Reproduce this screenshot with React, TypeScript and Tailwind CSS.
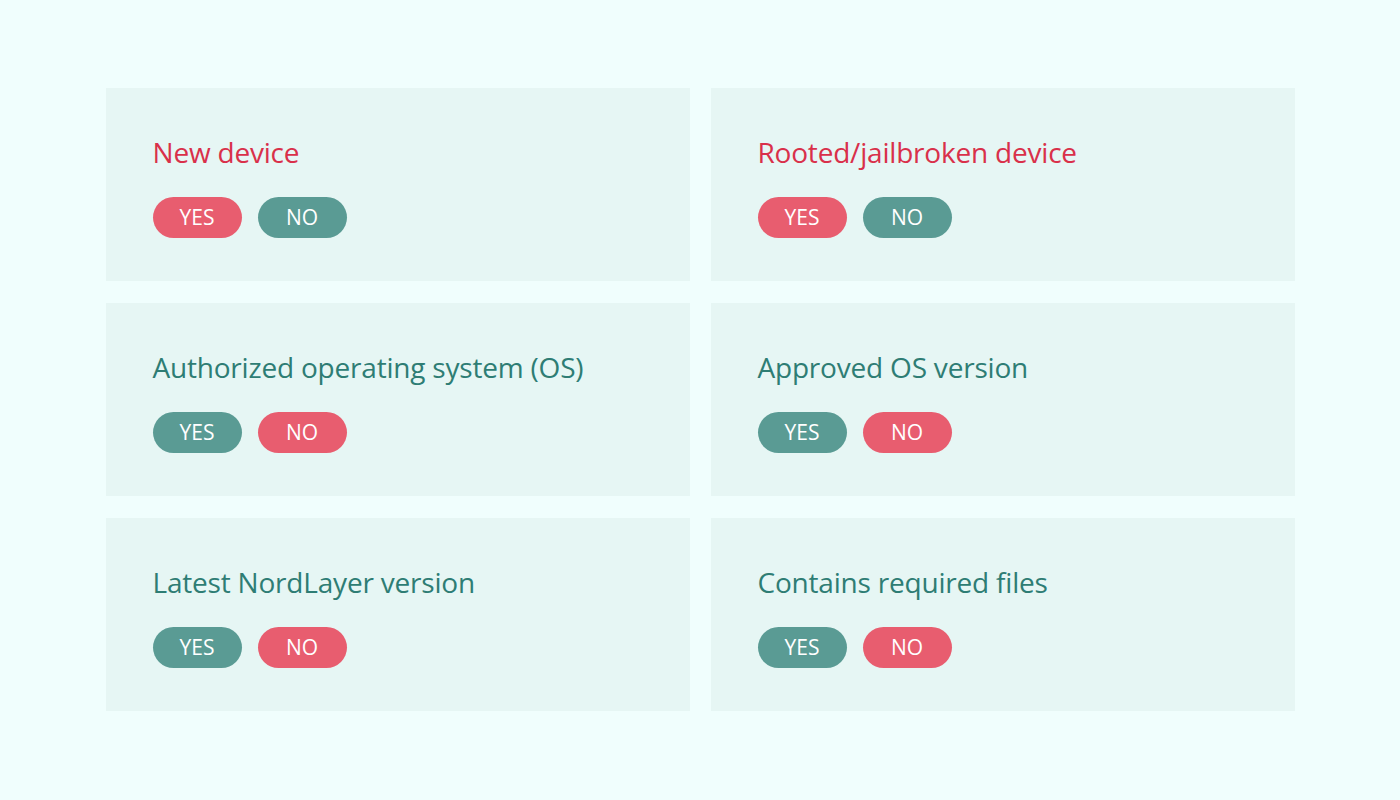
const items = [
  { title: "New device", bad: "yes" },
  { title: "Rooted/jailbroken device", bad: "yes" },
  { title: "Authorized operating system (OS)", bad: "no" },
  { title: "Approved OS version", bad: "no" },
  { title: "Latest NordLayer version", bad: "no" },
  { title: "Contains required files", bad: "no" },
]

function Pill({ label, red }: { label: string; red: boolean }) {
  return (
    <span
      className={`flex h-[41px] w-[89px] items-center justify-center rounded-full text-[21px] text-white ${
        red ? "bg-[#e85d6f]" : "bg-[#5a9b94]"
      }`}
    >
      {label}
    </span>
  )
}

export default function App() {
  return (
    <div className="flex min-h-[800px] w-full items-start justify-center bg-[#f0fefd] pt-[88px] font-['Open_Sans',sans-serif]">
      <div className="grid w-[1189px] grid-cols-2 gap-x-[21px] gap-y-[22px]">
        {items.map((it) => {
          const yesBad = it.bad === "yes"
          return (
            <div key={it.title} className="h-[193px] bg-[#e6f6f4] pl-[47px] pt-[45px]">
              <h2
                className={`text-[28px] leading-[38px] tracking-[-0.2px] ${
                  yesBad ? "text-[#d9304a]" : "text-[#2e7d74]"
                }`}
              >
                {it.title}
              </h2>
              <div className="mt-[26px] flex gap-4">
                <Pill label="YES" red={yesBad} />
                <Pill label="NO" red={!yesBad} />
              </div>
            </div>
          )
        })}
      </div>
    </div>
  )
}
